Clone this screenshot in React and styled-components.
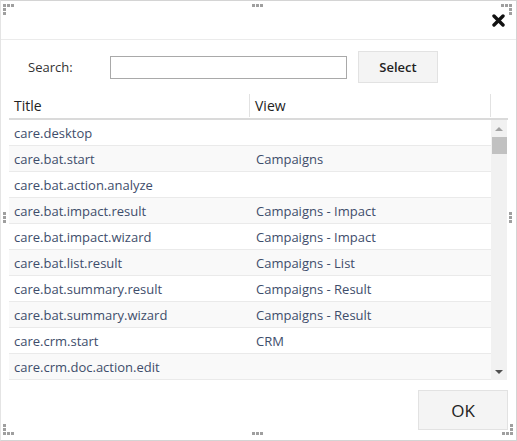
import React from "react";
import styled, { createGlobalStyle } from "styled-components";

const GlobalStyle = createGlobalStyle`
  body {
    margin: 0;
    font-family: "Open Sans", "Liberation Sans", sans-serif;
    background: #fff;
  }
`;

//css
const Dialog = styled.div`
  position: relative;
  width: 517px;
  height: 441px;
  box-sizing: border-box;
  border: 1px solid #d4d4d4;
  border-left-color: #e4e4e4;
  background: #fff;
  display: flex;
  flex-direction: column;
`;

const Header = styled.div`
  height: 39px;
  border-bottom: 1px solid #ebebeb;
  display: flex;
  justify-content: flex-end;
  align-items: flex-start;
  padding: 13px 10px 0 0;
  box-sizing: border-box;
`;

const CloseButton = styled.button`
  border: 0;
  background: none;
  padding: 0;
  width: 14px;
  height: 14px;
  cursor: pointer;
  display: flex;
`;

const SearchRow = styled.div`
  display: flex;
  align-items: center;
  height: 32px;
  margin-top: 11px;
  padding-left: 27px;
`;

const Label = styled.label`
  width: 82px;
  font-size: 13px;
  color: #333;
`;

const SearchInput = styled.input`
  width: 237px;
  height: 23px;
  box-sizing: border-box;
  border: 1px solid #a9a9a9;
  outline: none;
  margin-right: 11px;
`;

const Button = styled.button`
  box-sizing: border-box;
  width: ${(p) => p.$w}px;
  height: ${(p) => p.$h}px;
  background: #f4f4f4;
  border: 1px solid #e2e2e2;
  font-family: "Open Sans", "Liberation Sans", sans-serif;
  font-size: ${(p) => p.$size}px;
  font-weight: ${(p) => p.$weight};
  color: #222;
  cursor: pointer;
`;

const Table = styled.div`
  margin: 9px 8px 0 8px;
`;

const HeadRow = styled.div`
  display: grid;
  grid-template-columns: 241px 241px 16px;
  height: 26px;
  border-bottom: 2px solid #dadada;
`;

const HeadCell = styled.div`
  font-size: 14px;
  color: #222;
  padding-left: 5px;
  display: flex;
  align-items: center;
  border-right: ${(p) => (p.$last ? "0" : "1px solid #e2e2e2")};
  margin: 2px 0 1px;
`;

const Body = styled.div`
  display: flex;
  height: 260px;
`;

const Rows = styled.div`
  width: 482px;
  display: flex;
  flex-direction: column;
`;

const Row = styled.div`
  display: grid;
  grid-template-columns: 242px 1fr;
  height: 26px;
  box-sizing: border-box;
  border-bottom: 1px solid #eaeaea;
  background: ${(p) => (p.$alt ? "#f9f9f9" : "#fff")};
`;

const Cell = styled.div`
  font-size: 13px;
  color: #3e4d6b;
  padding-left: 5px;
  display: flex;
  align-items: center;
  white-space: nowrap;
`;

const Scrollbar = styled.div`
  width: 16px;
  background: #f1f1f1;
  display: flex;
  flex-direction: column;
  align-items: center;
`;

const Arrow = styled.div`
  height: 17px;
  width: 16px;
  display: flex;
  align-items: center;
  justify-content: center;
  &::after {
    content: "";
    border-left: 4px solid transparent;
    border-right: 4px solid transparent;
    ${(p) =>
      p.$down
        ? "border-top: 4px solid #505050;"
        : "border-bottom: 4px solid #a3a3a3;"}
  }
`;

const Thumb = styled.div`
  width: 15px;
  height: 17px;
  background: #c1c1c1;
`;

const Spacer = styled.div`
  flex: 1;
`;

const Footer = styled.div`
  display: flex;
  justify-content: flex-end;
  padding: 10px 8px 0 0;
`;

const Handle = styled.div`
  position: absolute;
  display: grid;
  grid-template-columns: repeat(3, 3px);
  grid-template-rows: repeat(3, 3px);
  gap: 1px;
  ${(p) => p.$pos}
`;

const Dot = styled.span`
  background: #8e8e8e;
  opacity: 0.85;
  grid-column: ${(p) => p.$c};
  grid-row: ${(p) => p.$r};
`;

const shapes = {
  tl: [[1, 1], [2, 1], [3, 1], [1, 2], [1, 3]],
  tr: [[1, 1], [2, 1], [3, 1], [3, 2], [3, 3]],
  bl: [[1, 1], [1, 2], [1, 3], [2, 3], [3, 3]],
  br: [[3, 1], [3, 2], [1, 3], [2, 3], [3, 3]],
  h: [[1, 1], [2, 1], [3, 1]],
  v: [[1, 1], [1, 2], [1, 3]],
};

const handles = [
  { s: "tl", pos: "top: 3px; left: 2px;" },
  { s: "h", pos: "top: 3px; left: 251px;" },
  { s: "tr", pos: "top: 3px; right: 4px;" },
  { s: "v", pos: "top: 211px; left: 2px;" },
  { s: "v", pos: "top: 211px; right: -4px;" },
  { s: "bl", pos: "bottom: 5px; left: 2px;" },
  { s: "h", pos: "bottom: -3px; left: 251px;" },
  { s: "br", pos: "bottom: 5px; right: 3px;" },
];

const rows = [
  ["care.desktop", ""],
  ["care.bat.start", "Campaigns"],
  ["care.bat.action.analyze", ""],
  ["care.bat.impact.result", "Campaigns - Impact"],
  ["care.bat.impact.wizard", "Campaigns - Impact"],
  ["care.bat.list.result", "Campaigns - List"],
  ["care.bat.summary.result", "Campaigns - Result"],
  ["care.bat.summary.wizard", "Campaigns - Result"],
  ["care.crm.start", "CRM"],
  ["care.crm.doc.action.edit", ""],
];

export default function App() {
  return (
    <>
      <GlobalStyle />
      <Dialog>
        <Header>
          <CloseButton aria-label="Close">
            <svg width="13" height="13" viewBox="0 0 13 13">
              <path
                d="M2 2 L11 11 M11 2 L2 11"
                stroke="#111"
                strokeWidth="3.4"
                strokeLinecap="round"
              />
            </svg>
          </CloseButton>
        </Header>
        <SearchRow>
          <Label>Search:</Label>
          <SearchInput />
          <Button $w={80} $h={32} $size={13} $weight={600}>
            Select
          </Button>
        </SearchRow>
        <Table>
          <HeadRow>
            <HeadCell>Title</HeadCell>
            <HeadCell>View</HeadCell>
            <HeadCell $last />
          </HeadRow>
          <Body>
            <Rows>
              {rows.map(([t, v], i) => (
                <Row key={t} $alt={i % 2 === 1}>
                  <Cell>{t}</Cell>
                  <Cell>{v}</Cell>
                </Row>
              ))}
            </Rows>
            <Scrollbar>
              <Arrow />
              <Thumb />
              <Spacer />
              <Arrow $down />
            </Scrollbar>
          </Body>
        </Table>
        <Footer>
          <Button $w={90} $h={40} $size={17} $weight={400}>
            OK
          </Button>
        </Footer>
        {handles.map((h, i) => (
          <Handle key={i} $pos={h.pos}>
            {shapes[h.s].map(([c, r], j) => (
              <Dot key={j} $c={c} $r={r} />
            ))}
          </Handle>
        ))}
      </Dialog>
    </>
  );
}
